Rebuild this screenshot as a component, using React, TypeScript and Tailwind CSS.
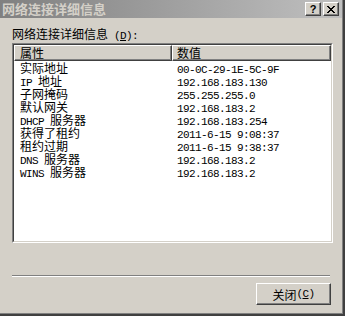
import React from "react";

function Mixed({ text }: { text: string }) {
  const parts = text.match(/[\x00-\x7F]+|[^\x00-\x7F]+/g) || [];
  return (
    <>
      {parts.map((p, i) =>
        /^[\x00-\x7F]/.test(p) ? (
          <span
            key={i}
            className="font-['Liberation_Mono',monospace] text-[11px] leading-[13px] tracking-[-0.6px] whitespace-pre"
          >
            {p}
          </span>
        ) : (
          <span key={i} className="font-['Noto_Sans_CJK_SC',sans-serif] text-[12px] leading-[13px]">
            {p}
          </span>
        )
      )}
    </>
  );
}

const rows: [string, string][] = [
  ["实际地址", "00-0C-29-1E-5C-9F"],
  ["IP 地址", "192.168.183.130"],
  ["子网掩码", "255.255.255.0"],
  ["默认网关", "192.168.183.2"],
  ["DHCP 服务器", "192.168.183.254"],
  ["获得了租约", "2011-6-15 9:08:37"],
  ["租约过期", "2011-6-15 9:38:37"],
  ["DNS 服务器", "192.168.183.2"],
  ["WINS 服务器", "192.168.183.2"],
];

export default function App() {
  return (
    <div className="w-[345px] h-[316px] bg-[#d4d0c8] overflow-hidden">
      <div className="w-[345px] h-[316px] border-r-2 border-b-2 border-[#404040]">
        <div className="h-full border-r border-b border-[#808080] flex flex-col">
          {/* title bar */}
          <div className="h-[18px] bg-gradient-to-r from-[#808080] to-[#c0c0c0] flex items-center justify-between pl-[2px] pr-[3px]">
            <span className="font-['Noto_Sans_CJK_SC',sans-serif] text-[13px] font-bold text-[#d4d0c8] leading-[14px]">
              网络连接详细信息
            </span>
            <div className="flex gap-[2px]">
              <div className="w-[16px] h-[14px] bg-[#d4d0c8] border-t border-l border-white border-r border-b border-r-[#404040] border-b-[#404040] shadow-[inset_-1px_-1px_#808080] flex items-center justify-center font-['Liberation_Sans',sans-serif] text-[11px] font-bold leading-none text-black">
                ?
              </div>
              <div className="w-[16px] h-[14px] bg-[#d4d0c8] border-t border-l border-white border-r border-b border-r-[#404040] border-b-[#404040] shadow-[inset_-1px_-1px_#808080] flex items-center justify-center">
                <svg width="8" height="7" viewBox="0 0 8 7">
                  <path d="M0 0h2v1h1v1h2v-1h1v-1h2v1h-1v1h-1v1h-1v1h1v1h1v1h1v1h-2v-1h-1v-1h-2v1h-1v1h-2v-1h1v-1h1v-1h1v-1h-1v-1h-1v-1h-1z" fill="#000" />
                </svg>
              </div>
            </div>
          </div>

          {/* body */}
          <div className="flex-1 flex flex-col pl-[12px] pr-[10px]">
            <div className="mt-[9px] h-[13px] leading-[13px] text-black">
              <Mixed text="网络连接详细信息 (" />
              <span className="font-['Liberation_Mono',monospace] text-[11px] leading-[13px] tracking-[-0.6px] underline">D</span>
              <Mixed text="):" />
            </div>

            {/* list */}
            <div className="mt-[3px] w-[321px] h-[200px] border-t border-l border-[#808080] border-r border-b border-r-white border-b-white">
              <div className="w-full h-full border-t border-l border-[#404040] border-r border-b border-r-[#d4d0c8] border-b-[#d4d0c8] bg-white flex flex-col">
                <div className="flex h-[16px]">
                  <div className="w-[158px] h-[16px] bg-[#d4d0c8] border-t border-l border-white border-r border-b border-r-[#404040] border-b-[#404040] shadow-[inset_-1px_-1px_#808080] pl-[5px] leading-[13px] text-black">
                    <Mixed text="属性" />
                  </div>
                  <div className="w-[159px] h-[16px] bg-[#d4d0c8] border-t border-l border-white border-r border-b border-r-[#404040] border-b-[#404040] shadow-[inset_-1px_-1px_#808080] pl-[4px] leading-[13px] text-black">
                    <Mixed text="数值" />
                  </div>
                </div>
                <div className="flex flex-col">
                  {rows.map(([k, v], i) => (
                    <div key={i} className="flex h-[13px] leading-[13px] text-black">
                      <div className="w-[158px] pl-[6px] whitespace-pre">
                        <Mixed text={k} />
                      </div>
                      <div className="pl-[5px] whitespace-pre">
                        <Mixed text={v} />
                      </div>
                    </div>
                  ))}
                </div>
              </div>
            </div>

            {/* separator */}
            <div className="mt-[32px] w-[318px] h-[2px] border-t border-[#808080] border-b border-b-white" />

            {/* button row */}
            <div className="flex justify-end pr-[1px] mt-[6px]">
              <div className="w-[75px] h-[22px] bg-[#d4d0c8] border-t border-l border-white border-r border-b border-r-[#404040] border-b-[#404040] shadow-[inset_-1px_-1px_#808080] flex items-center justify-center text-black leading-[13px]">
                <Mixed text="关闭" />
                <Mixed text="(" />
                <span className="font-['Liberation_Mono',monospace] text-[11px] leading-[13px] tracking-[-0.6px] underline">C</span>
                <Mixed text=")" />
              </div>
            </div>
          </div>
        </div>
      </div>
    </div>
  );
}
